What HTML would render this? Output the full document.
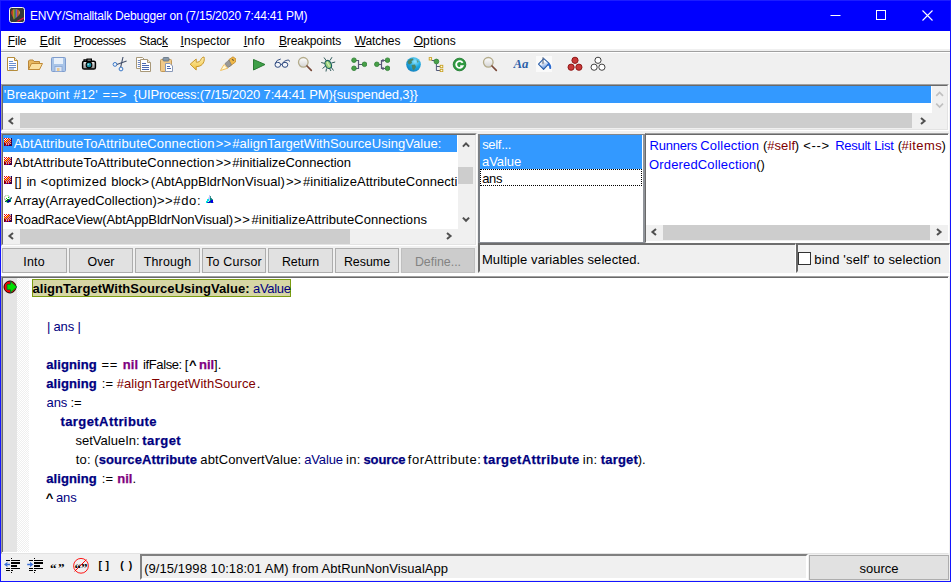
<!DOCTYPE html>
<html>
<head>
<meta charset="utf-8">
<title>ENVY/Smalltalk Debugger</title>
<style>
html,body{margin:0;padding:0;}
body{width:951px;height:582px;overflow:hidden;background:#f0f0f0;font-family:"Liberation Sans",sans-serif;font-size:12px;color:#000;position:relative;}
.abs{position:absolute;}
#win{position:absolute;left:0;top:0;width:951px;height:582px;background:#f0f0f0;}
.wb{position:absolute;background:#1414ff;z-index:9}
#title{position:absolute;left:0;top:0;width:951px;height:31px;background:#0000ff;color:#fff;box-shadow:inset 1px 1px 0 #1c1cff,inset -1px 0 0 #1c1cff;}
#title .txt{position:absolute;left:30px;top:8.5px;font-size:12px;line-height:15px;white-space:nowrap;letter-spacing:0.05px;}
#menu{position:absolute;left:0;top:31px;width:951px;height:18px;background:#fff;}
#menu span{position:absolute;top:3px;font-size:12px;line-height:15px;white-space:nowrap;}
#menu u{text-decoration:underline;text-underline-offset:1px;}
#tbsep{position:absolute;left:1px;top:51px;width:949px;height:1px;background:#a0a0a0;}
#tbsep2{position:absolute;left:1px;top:52px;width:949px;height:1px;background:#fff;}
.sunk{position:absolute;box-sizing:border-box;background:#fff;border:1px solid;border-color:#a0a0a0 #fff #fff #a0a0a0;}
.sunk>.in{position:absolute;left:0;top:0;right:0;bottom:0;box-sizing:border-box;border:1px solid;border-color:#696969 #e3e3e3 #e3e3e3 #696969;overflow:hidden;}
.lst{font-size:13px;line-height:17px;white-space:nowrap;}
.sel{background:#3399ff;color:#fff;}
.sb{position:absolute;background:#f0f0f0;}
.thumb{position:absolute;background:#cdcdcd;}
.btn{position:absolute;top:248px;height:25px;box-sizing:border-box;border:1px solid #adadad;background:#e1e1e1;text-align:center;font-size:12.4px;line-height:25px;padding-top:1px;}
.ico{position:absolute;top:56px;width:16px;height:16px;}
.code{position:absolute;white-space:nowrap;font-size:13px;line-height:19px;}
.q{font-family:"Liberation Serif",serif;font-weight:bold;line-height:17px}
.br{top:557.5px;font-family:"Liberation Sans",sans-serif;font-weight:bold;font-size:10.5px;line-height:14px}
.iv{color:#000080;font-weight:bold;-webkit-text-stroke:0.25px #000080;}
.nv{color:#000080;}
.kw{color:#800080;font-weight:bold;-webkit-text-stroke:0.25px #800080;}
.sy{color:#800000;}
</style>
<style id="fit">
#c1a{left:32.48px!important;letter-spacing:0.046px!important}
#c1b{left:253.07px!important;letter-spacing:-0.336px!important}
#c3{left:46.88px!important;letter-spacing:-0.162px!important}
#c5a{left:46.15px!important;letter-spacing:0.107px!important}
#c5b{left:101.55px!important;letter-spacing:0.506px!important}
#c5c{left:122.71px!important;letter-spacing:0.176px!important}
#c5d{left:143.10px!important;letter-spacing:-0.401px!important}
#c5e{left:184.71px!important;letter-spacing:0.975px!important}
#c5f{left:189.00px!important;letter-spacing:1.606px!important}
#c5g{left:199.00px!important;letter-spacing:0.009px!important}
#c5h{left:213.93px!important;letter-spacing:0.133px!important}
#c6a{left:46.15px!important;letter-spacing:0.107px!important}
#c6b{left:101.75px!important;letter-spacing:0.091px!important}
#c6c{left:116.78px!important;letter-spacing:0.044px!important}
#c6d{left:256.81px!important;letter-spacing:-0.025px!important}
#c7a{left:46.56px!important;letter-spacing:-0.123px!important}
#c7b{left:70.38px!important;letter-spacing:0.041px!important}
#c8{left:60.49px!important;letter-spacing:0.415px!important}
#c9a{left:75.50px!important;letter-spacing:0.001px!important}
#c9b{left:142.27px!important;letter-spacing:0.463px!important}
#c10a{left:75.66px!important;letter-spacing:0.277px!important}
#c10a2{left:94.32px!important;letter-spacing:0.556px!important}
#c10b{left:98.75px!important;letter-spacing:0.100px!important}
#c10c{left:200.36px!important;letter-spacing:0.087px!important}
#c10d{left:304.17px!important;letter-spacing:-0.136px!important}
#c10e{left:346.02px!important;letter-spacing:0.355px!important}
#c10f{left:363.46px!important;letter-spacing:-0.123px!important}
#c10g{left:407.86px!important;letter-spacing:0.477px!important}
#c10h{left:483.30px!important;letter-spacing:0.401px!important}
#c10i{left:582.72px!important;letter-spacing:0.355px!important}
#c10j{left:600.70px!important;letter-spacing:0.196px!important}
#c10k{left:637.64px!important;letter-spacing:0.123px!important}
#c11a{left:46.15px!important;letter-spacing:0.107px!important}
#c11b{left:101.75px!important;letter-spacing:0.091px!important}
#c11c{left:117.16px!important;letter-spacing:0.076px!important}
#c11d{left:132.61px!important;letter-spacing:-0.025px!important}
#c12a{left:45.70px!important;letter-spacing:1.606px!important}
#c12b{left:55.93px!important;letter-spacing:-0.056px!important}
#ttl{left:30.00px!important;letter-spacing:-0.194px!important}
#m1{left:7.79px!important;letter-spacing:-0.190px!important}
#m2{left:39.78px!important;letter-spacing:0.049px!important}
#m3{left:73.84px!important;letter-spacing:-0.483px!important}
#m4{left:139.13px!important;letter-spacing:-0.263px!important}
#m5{left:180.58px!important;letter-spacing:0.036px!important}
#m6{left:243.63px!important;letter-spacing:0.342px!important}
#m7{left:278.95px!important;letter-spacing:-0.099px!important}
#m8{left:354.64px!important;letter-spacing:-0.079px!important}
#m9{left:413.63px!important;letter-spacing:0.146px!important}
#vself{left:482.15px!important;letter-spacing:-0.297px!important}
#vaval{left:482.03px!important;letter-spacing:-0.069px!important}
#vans{left:482.13px!important;letter-spacing:-0.256px!important}
#ms{left:481.96px!important;letter-spacing:0.079px!important}
#bs{left:814.31px!important;letter-spacing:0.176px!important}
#st{left:144.17px!important;letter-spacing:0.061px!important}
#p1{left:3.85px!important;letter-spacing:0.092px!important}
#p2{left:102.58px!important;letter-spacing:0.640px!important}
#p3{left:133.58px!important;letter-spacing:-0.166px!important}
#s1a{left:13.72px!important;letter-spacing:0.153px!important}
#s1b{left:215.65px!important;letter-spacing:0.306px!important}
#s1c{left:232.17px!important;letter-spacing:0.068px!important}
#s2a{left:13.72px!important;letter-spacing:0.153px!important}
#s2b{left:215.65px!important;letter-spacing:0.306px!important}
#s2c{left:232.21px!important;letter-spacing:-0.021px!important}
#s3a{left:14.53px!important;letter-spacing:-0.067px!important}
#s3b{left:26.43px!important;letter-spacing:-0.263px!important}
#s3c{left:40.60px!important;letter-spacing:0.006px!important}
#s3d{left:48.56px!important;letter-spacing:0.284px!important}
#s3e{left:111.36px!important;letter-spacing:-0.112px!important}
#s3f{left:141.45px!important;letter-spacing:0.306px!important}
#s3g{left:150.79px!important;letter-spacing:0.026px!important}
#s3h{left:286.12px!important;letter-spacing:-0.044px!important}
#s3i{left:302.98px!important;letter-spacing:0.043px!important}
#s4a{left:13.99px!important;letter-spacing:0.020px!important}
#s4b{left:157.02px!important;letter-spacing:0.356px!important}
#s4c{left:173.26px!important;letter-spacing:0.672px!important}
#s5a{left:14.57px!important;letter-spacing:-0.134px!important}
#s5b{left:234.12px!important;letter-spacing:0.556px!important}
#s5c{left:251.48px!important;letter-spacing:0.043px!important}
#v1a{left:649.52px!important;letter-spacing:-0.234px!important}
#v1b{left:700.31px!important;letter-spacing:0.171px!important}
#v1c{left:762.97px!important;letter-spacing:0.056px!important}
#v1d{left:767.14px!important;letter-spacing:0.126px!important}
#v1e{left:794.77px!important;letter-spacing:-0.344px!important}
#v1f{left:803.13px!important;letter-spacing:0.739px!important}
#v1g{left:835.13px!important;letter-spacing:-0.260px!important}
#v1h{left:874.29px!important;letter-spacing:-0.184px!important}
#v1i{left:897.67px!important;letter-spacing:-0.144px!important}
#v1j{left:901.52px!important;letter-spacing:0.367px!important}
#v1k{left:941.52px!important;letter-spacing:-0.244px!important}
#v2a{left:649.02px!important;letter-spacing:0.160px!important}
#v2b{left:756.24px!important;letter-spacing:-0.086px!important}
</style>
</head>
<body>
<div id="win"></div>
<svg width="0" height="0" style="position:absolute"><defs>
<g id="chk"><path d="M0 0h1v1h-1zM2 0h1v1h-1zM4 0h1v1h-1zM1 1h1v1h-1zM3 1h1v1h-1zM5 1h1v1h-1zM0 2h1v1h-1zM2 2h1v1h-1zM4 2h1v1h-1zM6 2h1v1h-1zM1 3h1v1h-1zM3 3h1v1h-1zM5 3h1v1h-1zM0 4h1v1h-1zM2 4h1v1h-1zM4 4h1v1h-1zM6 4h1v1h-1zM1 5h1v1h-1zM3 5h1v1h-1zM5 5h1v1h-1zM3 6h1v1h-1zM5 6h1v1h-1z" fill="#f00000"/><path d="M1 0h1v1h-1zM3 0h1v1h-1zM0 1h1v1h-1zM2 1h1v1h-1zM1 2h1v1h-1z" fill="#ffffff"/><path d="M5 0h1v1h-1zM6 0h1v1h-1zM6 1h1v1h-1zM5 2h1v1h-1zM4 3h1v1h-1zM6 3h1v1h-1zM1 4h1v1h-1zM3 4h1v1h-1zM5 4h1v1h-1zM2 5h1v1h-1zM4 5h1v1h-1zM6 5h1v1h-1zM2 6h1v1h-1zM4 6h1v1h-1z" fill="#b4b4b4"/><path d="M7 0h1v1h-1zM7 2h1v1h-1zM7 4h1v1h-1zM7 6h1v1h-1zM5 7h1v1h-1zM6 7h1v1h-1z" fill="#000080"/><path d="M4 1h1v1h-1zM3 2h1v1h-1zM0 3h1v1h-1zM2 3h1v1h-1z" fill="#ffe000"/><path d="M7 1h1v1h-1zM7 3h1v1h-1zM0 5h1v1h-1zM7 5h1v1h-1zM0 6h1v1h-1zM1 6h1v1h-1zM6 6h1v1h-1zM0 7h1v1h-1zM3 7h1v1h-1zM7 7h1v1h-1z" fill="#800000"/><path d="M1 7h1v1h-1zM2 7h1v1h-1zM4 7h1v1h-1z" fill="#800080"/></g>
</defs></svg>

<div id="title">
  <svg class="abs" style="left:9px;top:7px" width="16" height="16" viewBox="0 0 16 16">
    <rect x="0.5" y="0.5" width="15" height="15" rx="2.2" fill="#343838" stroke="#f8f8f0"/>
    <defs><clipPath id="bal"><path d="M2.2 5.6C2.2 3 4.3 2 6.4 2C9 2 11 3.4 11 5.8C11 8 8 10 5.6 12L4.8 12.4C4.2 10 2.2 8.2 2.2 5.6Z"/></clipPath></defs>
    <g clip-path="url(#bal)"><rect x="2" y="2" width="1.7" height="11" fill="#d83020"/><rect x="3.7" y="2" width="0.8" height="11" fill="#e07820"/><rect x="4.5" y="2" width="1" height="11" fill="#e0c020"/><rect x="5.5" y="2" width="1.1" height="11" fill="#30a040"/><rect x="6.6" y="2" width="1.5" height="11" fill="#7a60c0"/><rect x="8.1" y="2" width="1.5" height="11" fill="#d85030"/><rect x="9.6" y="2" width="1.5" height="11" fill="#d0a040"/></g>
    <path d="M7 14.6L14.8 10.2V11.8L9.6 14.6Z" fill="#e81848"/>
  </svg>
  <div class="txt" id="ttl">ENVY/Smalltalk Debugger on (7/15/2020 7:44:41 PM)</div>
  <svg class="abs" style="left:830px;top:8px" width="110" height="16" viewBox="0 0 110 16">
    <path d="M0.5 7.5H10.5" stroke="#fff" stroke-width="1" fill="none"/>
    <rect x="46.5" y="2.5" width="9" height="9" stroke="#fff" stroke-width="1" fill="none"/>
    <path d="M92.5 2.5L102.5 12.5M102.5 2.5L92.5 12.5" stroke="#fff" stroke-width="1.1" fill="none"/>
  </svg>
</div>
<div id="menu">
  <span id="m1" style="left:7px"><u>F</u>ile</span>
  <span id="m2" style="left:39px"><u>E</u>dit</span>
  <span id="m3" style="left:73px"><u>P</u>rocesses</span>
  <span id="m4" style="left:138px">Stac<u>k</u></span>
  <span id="m5" style="left:180px"><u>I</u>nspector</span>
  <span id="m6" style="left:243px"><u>I</u>nfo</span>
  <span id="m7" style="left:278px"><u>B</u>reakpoints</span>
  <span id="m8" style="left:354px"><u>W</u>atches</span>
  <span id="m9" style="left:413px"><u>O</u>ptions</span>
</div>
<div id="tbsep"></div><div id="tbsep2"></div>

<!-- toolbar -->
<svg class="ico" style="left:4px" viewBox="0 0 16 16"><path d="M3.5 1.5H10.5L13.5 4.5V14.5H3.5Z" fill="#fff" stroke="#b48c3c" stroke-width="1"/><path d="M10.5 1.5V4.5H13.5" fill="#f4ead0" stroke="#b48c3c" stroke-width="1"/><path d="M5 5.5h4M5 7.5h7M5 9.5h7M5 11.5h7M5 13h5" stroke="#6a8fd0" stroke-width="1"/></svg>
<svg class="ico" style="left:27px" viewBox="0 0 16 16"><path d="M1.5 5V13.5H12.5V5.5H7L6 4H2.5Z" fill="#e8b860" stroke="#b8863a" stroke-width="1"/><path d="M1.5 13.5L4.5 7.5H15.5L12.5 13.5Z" fill="#fbe0a0" stroke="#c08a38" stroke-width="1"/></svg>
<svg class="ico" style="left:50px" viewBox="0 0 16 16"><rect x="1.5" y="1.5" width="14" height="14" rx="1" fill="#a8c4e8" stroke="#7f9ccc"/><rect x="4" y="2" width="9" height="6" fill="#e8f0fa"/><rect x="5" y="10.5" width="7" height="5" fill="#dde6f4" stroke="#8aa6d4" stroke-width="0.8"/><rect x="7" y="12" width="2.5" height="3" fill="#e8c890"/></svg>
<svg class="ico" style="left:81px" viewBox="0 0 16 16"><defs><linearGradient id="cm" x1="0" y1="0" x2="0" y2="1"><stop offset="0" stop-color="#f4f4f4"/><stop offset="1" stop-color="#8c8c8c"/></linearGradient></defs><path d="M3 5V3.8H5.6V5M6 5.2V3.2H10.4V5.2" fill="#d8d8d8" stroke="#000" stroke-width="1.2"/><rect x="1.6" y="5.2" width="12.8" height="7.8" rx="1.6" fill="url(#cm)" stroke="#000" stroke-width="1.5"/><circle cx="8" cy="9" r="3.4" fill="#000"/><circle cx="8" cy="9" r="2.3" fill="#1f94a4"/><circle cx="7.3" cy="8.3" r="0.9" fill="#8fdce4"/></svg>
<svg class="ico" style="left:112px" viewBox="0 0 16 16"><circle cx="3" cy="8.4" r="1.9" fill="#eef4fc" stroke="#3a78c8" stroke-width="1"/><circle cx="9" cy="13" r="1.9" fill="#eef4fc" stroke="#3a78c8" stroke-width="1"/><path d="M4.8 8.4L14.6 5" stroke="#44506a" stroke-width="1.1"/><path d="M8.7 11.2L11 1" stroke="#44506a" stroke-width="1.1"/></svg>
<svg class="ico" style="left:135px" viewBox="0 0 16 16"><path d="M1.5 1.5H7.5L9.5 3.5V12.5H1.5Z" fill="#fff" stroke="#a89878"/><path d="M2.8 4.5h4M2.8 6.5h4M2.8 8.5h4M2.8 10.5h4" stroke="#7088c0" stroke-width="1"/><path d="M5.5 3.5H12.5L15.5 6.5V15.5H5.5Z" fill="#fff" stroke="#a89878"/><path d="M12.5 3.5V6.5H15.5" fill="#efe6cc" stroke="#a89878"/><path d="M7 7.5h4M7 9.5h7M7 11.5h7M7 13.5h7" stroke="#4a68b0" stroke-width="1"/></svg>
<svg class="ico" style="left:158px" viewBox="0 0 16 16"><rect x="2.5" y="3.5" width="11" height="12" rx="1" fill="#f0c888" stroke="#c09858"/><rect x="5" y="1.5" width="6" height="3.5" rx="1" fill="#8898a8" stroke="#607080" stroke-width="0.8"/><path d="M7.5 7.5H12L14.5 10V15.5H7.5Z" fill="#fff" stroke="#8898b8"/><path d="M9 10.5h3M9 12.5h4" stroke="#4a68b0" stroke-width="1"/></svg>
<svg class="ico" style="left:189px" viewBox="0 0 16 16"><defs><linearGradient id="ug" x1="0" y1="0" x2="0" y2="1"><stop offset="0" stop-color="#fdeeb0"/><stop offset="1" stop-color="#f2c440"/></linearGradient></defs><path d="M1.2 8.2L7.2 3V6.2C9.5 6.4 11.5 5.2 12 3.2C12.4 2.2 13.6 1.2 15 1C16 4.5 14.5 10.2 8 10.6L7.2 10.6V14Z" fill="url(#ug)" stroke="#c8962a" stroke-width="1" stroke-linejoin="round"/></svg>
<svg class="ico" style="left:220px" viewBox="0 0 16 16"><path d="M9 3.5L13 0.8L16 3L15.5 6L9.5 10.5Z" fill="#f0b848" stroke="#c08828" stroke-width="0.8"/><path d="M12 3.2L13.8 4.6" stroke="#6a5a3a" stroke-width="1.2"/><path d="M5 7.5L9 4L11.5 9L7.5 12Z" fill="#989898" stroke="#707070" stroke-width="0.6"/><path d="M0.5 14.5L4 8.5L7.8 12.2Z" fill="#fff8d8" stroke="#f0c060" stroke-width="1"/></svg>
<svg class="ico" style="left:251px" viewBox="0 0 16 16"><path d="M2.5 3.5L14 8.5L2.5 14Z" fill="#3fa048" stroke="#2a7a32" stroke-width="1" stroke-linejoin="round"/></svg>
<svg class="ico" style="left:274px" viewBox="0 0 16 16"><ellipse cx="3.8" cy="8.8" rx="2.8" ry="2.5" fill="#f4f6fa" stroke="#2f4a80" stroke-width="1"/><ellipse cx="11" cy="8.8" rx="2.8" ry="2.5" fill="#f4f6fa" stroke="#2f4a80" stroke-width="1"/><path d="M1.2 7.4Q2.5 3.6 6.8 3M8.4 7.4Q10 4.6 13 4.2Q15.4 3.2 15.6 5.6M6.6 8.4H8.2" fill="none" stroke="#2f4a80" stroke-width="0.95"/></svg>
<svg class="ico" style="left:297px" viewBox="0 0 16 16"><defs><linearGradient id="mg" x1="0" y1="0" x2="0" y2="1"><stop offset="0" stop-color="#ffffff"/><stop offset="1" stop-color="#d4d4d4"/></linearGradient></defs><circle cx="6.3" cy="6.3" r="4.8" fill="url(#mg)" stroke="#b4ac8c" stroke-width="1.3"/><path d="M10 10L14.3 14.3" stroke="#7a4a3a" stroke-width="1.7" stroke-linecap="round"/></svg>
<svg class="ico" style="left:320px" viewBox="0 0 16 16"><path d="M4 1.5L6.5 5M12 1.2L10 4.5M1.2 6.5L5 7.5M11.5 7L15.2 6M2.5 12.5L5.5 10M11 11L13.5 14.5M6.5 12.5L6 15.5M9.5 12.5L11 15" stroke="#1a4848" stroke-width="0.9" fill="none"/><ellipse cx="8.2" cy="8.5" rx="3" ry="4.2" fill="#9cd07c" stroke="#1a6060" stroke-width="1.1" transform="rotate(-25 8.2 8.5)"/><path d="M7 6L9.6 10.6" stroke="#d0f0b8" stroke-width="1.2"/></svg>
<svg class="ico" style="left:351px" viewBox="0 0 16 16"><path d="M4.5 4.5H7.5V12.5H4.5M7.5 8.5H12" fill="none" stroke="#585878" stroke-width="1.2"/><circle cx="3" cy="4.2" r="2.3" fill="#48a048" stroke="#2f7f35" stroke-width="0.8"/><circle cx="3" cy="12.3" r="2.3" fill="#48a048" stroke="#2f7f35" stroke-width="0.8"/><circle cx="13.5" cy="8.3" r="2.3" fill="#48a048" stroke="#2f7f35" stroke-width="0.8"/></svg>
<svg class="ico" style="left:374px" viewBox="0 0 16 16"><path d="M11.5 4.5H7.5V12.5H11.5M7.5 8.5H3.5M9 3V6M9 11V14" fill="none" stroke="#585878" stroke-width="1.2"/><circle cx="13.5" cy="4.2" r="2.3" fill="#48a048" stroke="#2f7f35" stroke-width="0.8"/><circle cx="13.5" cy="12.3" r="2.3" fill="#48a048" stroke="#2f7f35" stroke-width="0.8"/><circle cx="2.8" cy="8.3" r="2.3" fill="#48a048" stroke="#2f7f35" stroke-width="0.8"/></svg>
<svg class="ico" style="left:405px" viewBox="0 0 16 16"><defs><radialGradient id="gl" cx="0.6" cy="0.3" r="0.8"><stop offset="0" stop-color="#8fe4ff"/><stop offset="0.5" stop-color="#1aa8e0"/><stop offset="1" stop-color="#1478b8"/></radialGradient></defs><circle cx="8.5" cy="8.5" r="7.3" fill="url(#gl)"/><path d="M2.5 5.5Q4.5 2.5 8 2.5L8.5 4L6.5 5L7 7L4.5 8.5L3 7.5Z" fill="#4c8468"/><path d="M6.5 9L10 8.5L11 11L8.8 14.5L7.5 13Z" fill="#4c8468"/><path d="M11.5 3.5L13.8 5.5L12.5 7Z" fill="#5a9a88"/></svg>
<svg class="ico" style="left:428px" viewBox="0 0 16 16"><path d="M3.5 4.5H6.5M8.4 8V14.5H12M8.4 10.5H12" fill="none" stroke="#505878" stroke-width="1"/><rect x="1.2" y="1.6" width="2.4" height="2.4" fill="#fffbe0" stroke="#c8a020" stroke-width="0.9"/><rect x="12.2" y="9.3" width="2.6" height="2.4" fill="#fffbe0" stroke="#c8a020" stroke-width="0.9"/><rect x="12.2" y="13.3" width="2.6" height="2.4" fill="#fffbe0" stroke="#c8a020" stroke-width="0.9"/><circle cx="8.4" cy="5.5" r="2.4" fill="#48a048" stroke="#2f7f35" stroke-width="0.8"/></svg>
<svg class="ico" style="left:451px" viewBox="0 0 16 16"><circle cx="8.5" cy="8.5" r="6.3" fill="#2f9a40" stroke="#207a30" stroke-width="0.9"/><path d="M11.6 6.9A3.4 3.4 0 1 0 11.6 10.1H9.2" fill="none" stroke="#fff" stroke-width="1.9"/></svg>
<svg class="ico" style="left:482px" viewBox="0 0 16 16"><defs><linearGradient id="mg2" x1="0" y1="0" x2="0" y2="1"><stop offset="0" stop-color="#ffffff"/><stop offset="1" stop-color="#d4d4d4"/></linearGradient></defs><circle cx="6.3" cy="6.3" r="4.8" fill="url(#mg2)" stroke="#b4ac8c" stroke-width="1.3"/><path d="M10 10L14.3 14.3" stroke="#7a4a3a" stroke-width="1.7" stroke-linecap="round"/></svg>
<svg class="ico" style="left:513px" viewBox="0 0 16 16"><text x="0.5" y="12" font-family="Liberation Serif, serif" font-style="italic" font-weight="bold" font-size="11.5" fill="#2a5ea8" textLength="15" lengthAdjust="spacingAndGlyphs">Aa</text></svg>
<svg class="ico" style="left:536px" viewBox="0 0 16 16"><rect width="16" height="16" fill="#fafafa"/><defs><linearGradient id="bk" x1="0.3" y1="0" x2="0.7" y2="1"><stop offset="0.35" stop-color="#ffffff"/><stop offset="1" stop-color="#3a78d8"/></linearGradient></defs><path d="M2.5 8.2L7.8 2.6L13.2 7.4L7.6 13.4Z" fill="url(#bk)" stroke="#2a5ea8" stroke-width="1.1" stroke-linejoin="round"/><path d="M7 1.2V7" stroke="#506080" stroke-width="1"/><circle cx="7" cy="7" r="0.9" fill="#fff" stroke="#506080" stroke-width="0.6"/><path d="M12.2 7Q15.6 7.6 15.2 12.4Q13.6 14 13.2 12Q13.6 9.4 11 9.2Z" fill="#2a6ad0"/></svg>
<svg class="ico" style="left:567px" viewBox="0 0 16 16"><circle cx="8" cy="4.3" r="3.1" fill="#c83838" stroke="#901818" stroke-width="1"/><circle cx="4.1" cy="11.2" r="3.1" fill="#c83838" stroke="#901818" stroke-width="1"/><circle cx="11.9" cy="11.2" r="3.1" fill="#c83838" stroke="#901818" stroke-width="1"/></svg>
<svg class="ico" style="left:590px" viewBox="0 0 16 16"><circle cx="8" cy="4.3" r="3.1" fill="#fff" stroke="#404040" stroke-width="1"/><circle cx="4.1" cy="11.2" r="3.1" fill="#fff" stroke="#404040" stroke-width="1"/><circle cx="11.9" cy="11.2" r="3.1" fill="#fff" stroke="#404040" stroke-width="1"/></svg>


<!-- process list -->
<div class="sunk" style="left:1px;top:84px;width:948px;height:47px"><div class="in"></div></div>
<div class="abs sel" style="left:3px;top:86px;width:928px;height:17px"></div>
<div class="abs lst" id="p1" style="top:86px;color:#fff">'Breakpoint #12'</div>
<div class="abs lst" id="p2" style="top:86px;color:#fff">==&gt;</div>
<div class="abs lst" id="p3" style="top:86px;color:#fff">{UIProcess:(7/15/2020 7:44:41 PM){suspended,3}}</div>
<div class="sb" style="left:932px;top:86px;width:15px;height:43px"></div>
<svg class="abs" style="left:934px;top:89px" width="12" height="22" viewBox="0 0 12 22"><path d="M2.2 6.8L5.6 3.4L9 6.8M2.2 14.6L5.6 18L9 14.6" stroke="#c0c0c0" stroke-width="1.7" fill="none"/></svg>
<div class="sb" style="left:3px;top:113px;width:929px;height:16px"></div>
<div class="thumb" style="left:20px;top:113px;width:892px;height:15px"></div>
<svg class="abs" style="left:7px;top:116px" width="8" height="10" viewBox="0 0 8 10"><path d="M6 1.9L2.4 5L6 8.1" stroke="#505050" stroke-width="2" fill="none"/></svg>
<svg class="abs" style="left:919px;top:116px" width="8" height="10" viewBox="0 0 8 10"><path d="M2 1.9L5.6 5L2 8.1" stroke="#505050" stroke-width="2" fill="none"/></svg>

<!-- stack list -->
<div class="sunk" style="left:1px;top:133px;width:476px;height:113px"><div class="in"></div></div>
<div class="abs sel" style="left:3px;top:135px;width:454px;height:17px"></div>
<div class="abs lst" id="s1a" style="top:135px;color:#fff">AbtAttributeToAttributeConnection</div>
<div class="abs lst" id="s1b" style="top:135px;color:#fff">&gt;&gt;</div>
<div class="abs lst" id="s1c" style="top:135px;color:#fff">#alignTargetWithSourceUsingValue:</div>
<div class="abs lst" id="s2a" style="top:154px;">AbtAttributeToAttributeConnection</div>
<div class="abs lst" id="s2b" style="top:154px;">&gt;&gt;</div>
<div class="abs lst" id="s2c" style="top:154px;">#initializeConnection</div>
<div class="abs lst" id="s3a" style="top:173px;">[]</div>
<div class="abs lst" id="s3b" style="top:173px;">in</div>
<div class="abs lst" id="s3c" style="top:173px;">&lt;</div>
<div class="abs lst" id="s3d" style="top:173px;">optimized</div>
<div class="abs lst" id="s3e" style="top:173px;">block</div>
<div class="abs lst" id="s3f" style="top:173px;">&gt;</div>
<div class="abs lst" id="s3g" style="top:173px;">(AbtAppBldrNonVisual)</div>
<div class="abs lst" id="s3h" style="top:173px;">&gt;&gt;</div>
<div class="abs" style="left:0;top:173px;width:457px;height:17px;overflow:hidden"><div class="abs lst" id="s3i" style="top:0px;">#initializeAttributeConnections</div></div>
<div class="abs lst" id="s4a" style="top:192px;">Array(ArrayedCollection)</div>
<div class="abs lst" id="s4b" style="top:192px;">&gt;&gt;</div>
<div class="abs lst" id="s4c" style="top:192px;">#do:</div>
<div class="abs lst" id="s5a" style="top:211px;">RoadRaceView(AbtAppBldrNonVisual)</div>
<div class="abs lst" id="s5b" style="top:211px;">&gt;&gt;</div>
<div class="abs lst" id="s5c" style="top:211px;">#initializeAttributeConnections</div>
<svg class="abs" style="left:4px;top:138px" width="8" height="8" viewBox="0 0 8 8" shape-rendering="crispEdges"><use href="#chk"/></svg>
<svg class="abs" style="left:4px;top:157px" width="8" height="8" viewBox="0 0 8 8" shape-rendering="crispEdges"><use href="#chk"/></svg>
<svg class="abs" style="left:4px;top:176px" width="8" height="8" viewBox="0 0 8 8" shape-rendering="crispEdges"><use href="#chk"/></svg>
<svg class="abs" style="left:4px;top:214px" width="8" height="8" viewBox="0 0 8 8" shape-rendering="crispEdges"><use href="#chk"/></svg>
<svg class="abs" style="left:4px;top:195px" width="8" height="8" viewBox="0 0 8 8" shape-rendering="crispEdges"><path d="M1 0h1v1h-1zM3 0h1v1h-1zM4 0h1v1h-1zM0 1h1v1h-1zM4 1h1v1h-1z" fill="#b8e8b8"/><path d="M2 0h1v1h-1zM1 1h1v1h-1zM0 2h1v1h-1zM2 7h1v1h-1zM5 7h1v1h-1z" fill="#f0d0d0"/><path d="M2 1h1v1h-1zM3 1h1v1h-1zM1 2h1v1h-1zM2 2h1v1h-1zM3 2h1v1h-1zM1 3h1v1h-1zM3 3h1v1h-1zM4 3h1v1h-1zM2 4h1v1h-1z" fill="#ffffff"/><path d="M5 1h1v1h-1zM5 2h1v1h-1zM6 2h1v1h-1zM5 3h1v1h-1z" fill="#d0c8e8"/><path d="M4 2h1v1h-1zM2 3h1v1h-1z" fill="#00e000"/><path d="M7 2h1v1h-1zM7 3h1v1h-1z" fill="#686868"/><path d="M0 3h1v1h-1zM0 4h1v1h-1zM1 4h1v1h-1zM1 5h1v1h-1z" fill="#c0c0c0"/><path d="M6 3h1v1h-1zM5 4h1v1h-1zM6 4h1v1h-1zM6 5h1v1h-1zM2 6h1v1h-1zM6 6h1v1h-1zM3 7h1v1h-1zM4 7h1v1h-1z" fill="#008888"/><path d="M3 4h1v1h-1zM4 4h1v1h-1zM2 5h1v1h-1zM3 5h1v1h-1zM1 6h1v1h-1z" fill="#008000"/><path d="M4 5h1v1h-1zM5 5h1v1h-1zM3 6h1v1h-1zM4 6h1v1h-1zM5 6h1v1h-1z" fill="#000090"/></svg>
<svg class="abs" style="left:206px;top:195px" width="8" height="8" viewBox="0 0 8 8" shape-rendering="crispEdges"><path d="M3 0h1v1h-1zM3 1h1v1h-1zM3 2h1v1h-1zM2 3h1v1h-1zM3 3h1v1h-1zM3 4h1v1h-1zM3 5h1v1h-1z" fill="#c0c8ff"/><path d="M4 1h1v1h-1zM4 2h1v1h-1zM5 3h1v1h-1zM6 4h1v1h-1z" fill="#409090"/><path d="M2 2h1v1h-1z" fill="#d8ffd8"/><path d="M4 3h1v1h-1zM4 4h1v1h-1zM5 4h1v1h-1zM4 5h1v1h-1zM3 6h1v1h-1zM1 7h1v1h-1zM4 7h1v1h-1z" fill="#008080"/><path d="M1 4h1v1h-1zM2 4h1v1h-1zM1 5h1v1h-1zM2 5h1v1h-1zM0 6h1v1h-1zM1 6h1v1h-1zM0 7h1v1h-1z" fill="#00e8e8"/><path d="M5 5h1v1h-1zM6 5h1v1h-1zM4 6h1v1h-1zM5 6h1v1h-1zM6 6h1v1h-1zM2 7h1v1h-1zM3 7h1v1h-1zM5 7h1v1h-1zM6 7h1v1h-1z" fill="#0000e0"/><path d="M2 6h1v1h-1z" fill="#e0e0ff"/><path d="M7 7h1v1h-1z" fill="#c0c0a0"/></svg>
<div class="sb" style="left:458px;top:135px;width:17px;height:94px"></div>
<div class="thumb" style="left:458px;top:167px;width:15px;height:17px"></div>
<svg class="abs" style="left:460.5px;top:140px" width="10" height="8" viewBox="0 0 10 8"><path d="M1.9 6.6L5 3.4L8.1 6.6" stroke="#505050" stroke-width="2" fill="none"/></svg>
<svg class="abs" style="left:460.5px;top:216px" width="10" height="8" viewBox="0 0 10 8"><path d="M1.9 1.6L5 4.8L8.1 1.6" stroke="#505050" stroke-width="2" fill="none"/></svg>
<div class="sb" style="left:3px;top:229px;width:472px;height:15px"></div>
<div class="thumb" style="left:20px;top:229px;width:330px;height:15px"></div>
<svg class="abs" style="left:7px;top:231px" width="8" height="10" viewBox="0 0 8 10"><path d="M6 1.9L2.4 5L6 8.1" stroke="#505050" stroke-width="2" fill="none"/></svg>
<svg class="abs" style="left:445px;top:231px" width="8" height="10" viewBox="0 0 8 10"><path d="M2 1.9L5.6 5L2 8.1" stroke="#505050" stroke-width="2" fill="none"/></svg>

<!-- variables list -->
<div class="abs" style="left:478px;top:134px;width:167px;height:109px;box-sizing:border-box;background:#fff;border:2px solid #7c8086;border-top:1px solid #82868c;border-bottom:1px solid #8a8e96;border-right-color:#90949a"></div>
<div class="abs sel" style="left:480px;top:135px;width:162px;height:34px"></div>
<div class="abs lst" id="vself" style="left:482px;top:136px;color:#fff">self...</div>
<div class="abs lst" id="vaval" style="left:482px;top:153px;color:#fff">aValue</div>
<div class="abs lst" id="vans" style="left:482px;top:170px">ans</div>
<div class="abs" style="left:480px;top:169px;width:162px;height:17px;box-sizing:border-box;border:1px dotted #000"></div>

<!-- value pane -->
<div class="abs" style="left:645px;top:133px;width:304px;height:110px;box-sizing:border-box;background:#fff;border:1px solid;border-color:#a0a0a0 #fff #fff #696969;box-shadow:inset 0 1px 0 #696969"></div>
<div class="abs lst" id="v1a" style="top:137px;color:#0000ff">Runners</div>
<div class="abs lst" id="v1b" style="top:137px;color:#0000ff">Collection</div>
<div class="abs lst" id="v1c" style="top:137px;">(</div>
<div class="abs lst" id="v1d" style="top:137px;color:#800000">#self</div>
<div class="abs lst" id="v1e" style="top:137px;">)</div>
<div class="abs lst" id="v1f" style="top:137px;">&lt;--&gt;</div>
<div class="abs lst" id="v1g" style="top:137px;color:#0000ff">Result</div>
<div class="abs lst" id="v1h" style="top:137px;color:#0000ff">List</div>
<div class="abs lst" id="v1i" style="top:137px;">(</div>
<div class="abs lst" id="v1j" style="top:137px;color:#800000">#items</div>
<div class="abs lst" id="v1k" style="top:137px;">)</div>
<div class="abs lst" id="v2a" style="top:156px;color:#0000ff">OrderedCollection</div>
<div class="abs lst" id="v2b" style="top:156px;">()</div>
<div class="sb" style="left:646px;top:225px;width:302px;height:16px"></div>
<div class="thumb" style="left:663px;top:225px;width:267px;height:15px"></div>
<svg class="abs" style="left:650px;top:227px" width="8" height="10" viewBox="0 0 8 10"><path d="M6 1.9L2.4 5L6 8.1" stroke="#505050" stroke-width="2" fill="none"/></svg>
<svg class="abs" style="left:935px;top:227px" width="8" height="10" viewBox="0 0 8 10"><path d="M2 1.9L5.6 5L2 8.1" stroke="#505050" stroke-width="2" fill="none"/></svg>

<!-- buttons -->
<div class="btn" style="left:2px;width:65px;letter-spacing:0.2px;text-indent:-1px">Into</div>
<div class="btn" style="left:69px;width:64px">Over</div>
<div class="btn" style="left:135px;width:65px;letter-spacing:0.2px">Through</div>
<div class="btn" style="left:202px;width:64px;letter-spacing:0.25px">To Cursor</div>
<div class="btn" style="left:268px;width:65px">Return</div>
<div class="btn" style="left:335px;width:64px">Resume</div>
<div class="btn" style="left:401px;width:74px;background:#cccccc;border-color:#bfbfbf;color:#838383">Define...</div>

<!-- status -->
<div class="abs" style="left:1px;top:273px;width:949px;height:3px;background:#fff"></div>
<div class="abs" style="left:478px;top:243px;width:318px;height:30px;box-sizing:border-box;border:2px solid;border-color:#6e6e6e #fff #f0f0f0 #696969;border-right-width:1px"></div>
<div class="abs lst" id="ms" style="left:482px;top:251px">Multiple variables selected.</div>
<div class="abs" style="left:796px;top:243px;width:154px;height:30px;box-sizing:border-box;border:2px solid;border-color:#6e6e6e #fff #f0f0f0 #696969;border-right-width:1px"></div>
<div class="abs" style="left:798px;top:252px;width:13px;height:13px;box-sizing:border-box;border:1px solid #333;background:#fff"></div>
<div class="abs lst" id="bs" style="left:814px;top:251px">bind 'self' to selection</div>


<!-- code pane -->
<div class="abs" style="left:1px;top:276px;width:948px;height:278px;box-sizing:border-box;background:#fff;border:1px solid;border-color:#a0a0a0 #fff #e3e3e3 #a0a0a0;"></div>
<div class="abs" style="left:2px;top:277px;width:946px;height:275px;box-sizing:border-box;border:1px solid;border-color:#696969 #fff #fff #696969;border-right:0;border-bottom:0"></div>
<div class="abs" style="left:3px;top:278px;width:14px;height:274px;background:#e4e4e4"></div>
<svg class="abs" style="left:17px;top:278px" width="12" height="274"><defs><pattern id="dots" width="2" height="2" patternUnits="userSpaceOnUse"><rect width="2" height="2" fill="#fff"/><rect width="1" height="1" fill="#efefef"/><rect x="1" y="1" width="1" height="1" fill="#efefef"/></pattern></defs><rect width="12" height="274" fill="url(#dots)"/></svg>
<svg class="abs" style="left:3px;top:279px" width="16" height="16" viewBox="0 0 16 16"><circle cx="7" cy="8" r="6" fill="#ff0000" stroke="#200" stroke-width="1"/><path d="M4 5.2H7.5V2.2L13.8 8L7.5 13.8V10.8H4Z" fill="#00e000" stroke="#063" stroke-width="0.8"/></svg>
<div class="abs" style="left:32px;top:279px;width:259px;height:18px;box-sizing:border-box;background:#d6d6a4;border:1px solid #7a9c10"></div>
<div class="code" id="c1a" style="top:279px;font-weight:bold">alignTargetWithSourceUsingValue:</div>
<div class="code nv" id="c1b" style="top:279px">aValue</div>
<div class="code nv" id="c3" style="top:317px">| ans |</div>
<div class="code iv" id="c5a" style="top:355px">aligning</div>
<div class="code" id="c5b" style="top:355px">==</div>
<div class="code kw" id="c5c" style="top:355px">nil</div>
<div class="code" id="c5d" style="top:355px">ifFalse:</div>
<div class="code" id="c5e" style="top:355px">[</div>
<div class="code" id="c5f" style="top:355px;font-weight:bold">^</div>
<div class="code kw" id="c5g" style="top:355px">nil</div>
<div class="code" id="c5h" style="top:355px">].</div>
<div class="code iv" id="c6a" style="top:374px">aligning</div>
<div class="code" id="c6b" style="top:374px">:=</div>
<div class="code sy" id="c6c" style="top:374px">#alignTargetWithSource</div>
<div class="code" id="c6d" style="top:374px">.</div>
<div class="code nv" id="c7a" style="top:393px">ans</div>
<div class="code" id="c7b" style="top:393px">:=</div>
<div class="code iv" id="c8" style="top:412px">targetAttribute</div>
<div class="code" id="c9a" style="top:431px">setValueIn:</div>
<div class="code iv" id="c9b" style="top:431px">target</div>
<div class="code" id="c10a" style="top:450px">to:</div>
<div class="code" id="c10a2" style="top:450px">(</div>
<div class="code iv" id="c10b" style="top:450px">sourceAttribute</div>
<div class="code" id="c10c" style="top:450px">abtConvertValue:</div>
<div class="code nv" id="c10d" style="top:450px">aValue</div>
<div class="code" id="c10e" style="top:450px">in:</div>
<div class="code iv" id="c10f" style="top:450px">source</div>
<div class="code" id="c10g" style="top:450px">forAttribute:</div>
<div class="code iv" id="c10h" style="top:450px">targetAttribute</div>
<div class="code" id="c10i" style="top:450px">in:</div>
<div class="code iv" id="c10j" style="top:450px">target</div>
<div class="code" id="c10k" style="top:450px">).</div>
<div class="code iv" id="c11a" style="top:469px">aligning</div>
<div class="code" id="c11b" style="top:469px">:=</div>
<div class="code kw" id="c11c" style="top:469px">nil</div>
<div class="code" id="c11d" style="top:469px">.</div>
<div class="code" id="c12a" style="top:488px;font-weight:bold">^</div>
<div class="code nv" id="c12b" style="top:488px">ans</div>

<!-- bottom bar -->
<div class="abs" style="left:140px;top:554px;width:668px;height:26px;box-sizing:border-box;border:2px solid;border-color:#808080 #fff #fff #808080;"></div>
<div class="abs lst" id="st" style="left:144px;top:560px">(9/15/1998 10:18:01 AM) from AbtRunNonVisualApp</div>
<div class="abs" style="left:809px;top:555px;width:140px;height:25px;box-sizing:border-box;border:1px solid #adadad;background:#e1e1e1;text-align:center;font-size:13px;line-height:23px;padding-top:1px">source</div>
<svg class="abs" style="left:4px;top:557px" width="17" height="17" viewBox="0 0 17 17"><path d="M7 1h1v1h-1zM7 15h1v1h-1zM2 3h4v1h-4zM7 3h9v1h-9zM7 5h9v2h-9zM7 8h6v2h-6zM2 11h4v1h-4zM7 11h9v1h-9zM2 13h4v1h-4zM7 13h2v1h-2z" fill="#000" shape-rendering="crispEdges"/><path d="M0 7.5L3.6 4.8L3.2 6.8H6V8.2H3.2L3.6 10.2Z" fill="#3a6fd8"/></svg>
<svg class="abs" style="left:27px;top:557px" width="17" height="17" viewBox="0 0 17 17"><path d="M7 1h1v1h-1zM7 15h1v1h-1zM2 3h4v1h-4zM7 3h9v1h-9zM7 5h9v2h-9zM7 8h6v2h-6zM2 11h4v1h-4zM7 11h9v1h-9zM2 13h4v1h-4zM7 13h2v1h-2z" fill="#000" shape-rendering="crispEdges"/><path d="M6.4 7.5L2.8 4.8L3.2 6.8H0.2V8.2H3.2L2.8 10.2Z" fill="#3a6fd8"/></svg>
<div class="abs q" style="left:50px;top:560px;font-size:13px">&ldquo;</div><div class="abs q" style="left:58px;top:559px;font-size:13px">&rdquo;</div>
<svg class="abs" style="left:72px;top:557px" width="18" height="18" viewBox="0 0 18 18"><circle cx="9" cy="8.8" r="7.4" fill="none" stroke="#ff0000" stroke-width="0.9"/><path d="M2.6 14.4L14.4 2.6" stroke="#ff0000" stroke-width="1"/></svg>
<div class="abs q" style="left:74.5px;top:560px;font-size:13px">&ldquo;</div><div class="abs q" style="left:81px;top:559px;font-size:13px">&rdquo;</div>
<div class="abs br" style="left:98.6px">[</div><div class="abs br" style="left:105.4px">]</div>
<div class="abs br" style="left:120.3px">(</div><div class="abs br" style="left:128.7px">)</div>
<div class="wb" style="left:0;top:0;width:1px;height:582px"></div><div class="wb" style="left:950px;top:0;width:1px;height:582px"></div><div class="wb" style="left:0;top:581px;width:951px;height:1px"></div><div class="wb" style="left:0;top:0;width:951px;height:1px;background:#1c1cff"></div>
</body>
</html>
